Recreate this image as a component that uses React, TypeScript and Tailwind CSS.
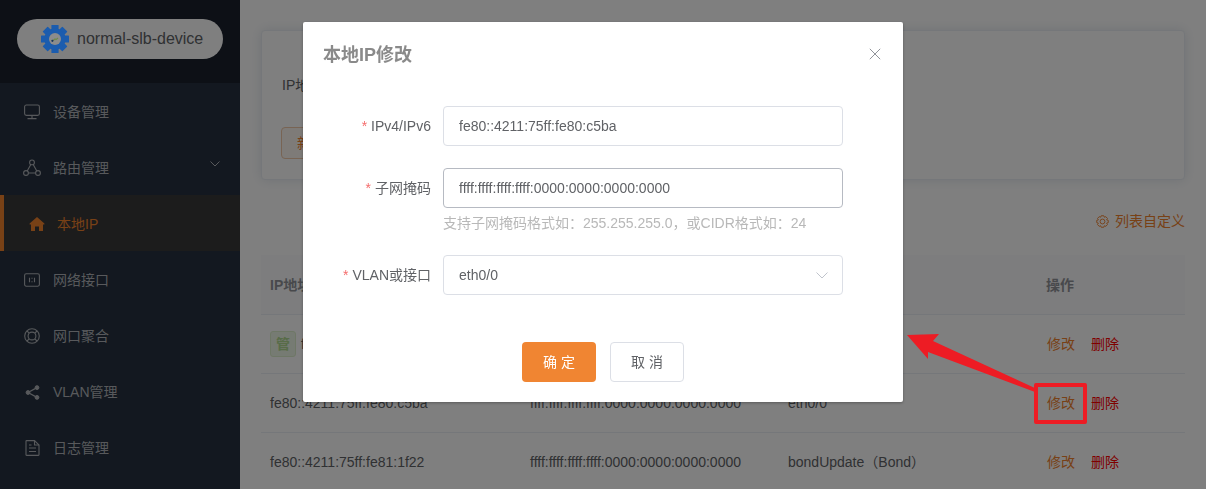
import React from "react";

const ff = { fontFamily: '"Liberation Sans","Noto Sans CJK SC",sans-serif' };

function MonitorIcon() {
  return (
    <svg width="16" height="16" viewBox="0 0 16 16" fill="none" stroke="currentColor" strokeWidth="1.1">
      <rect x="0.6" y="1" width="14.8" height="10.4" rx="1.8" />
      <path d="M8 11.4V14.4M3.5 14.6H12.5" />
    </svg>
  );
}
function RouteIcon() {
  return (
    <svg width="18" height="18" viewBox="0 0 18 18" fill="none" stroke="currentColor" strokeWidth="1.1">
      <circle cx="9" cy="3.4" r="2.4" />
      <circle cx="3" cy="14" r="2.4" />
      <circle cx="15" cy="14" r="2.4" />
      <path d="M7.8 5.5L4.2 11.9M10.2 5.5L13.8 11.9M5.4 14H12.6" />
    </svg>
  );
}
function HomeIcon() {
  return (
    <svg width="16" height="16" viewBox="0 0 16 16" fill="currentColor">
      <path d="M8 1L15.4 7.6V8.6H14V15H10V10.4H6V15H2V8.6H0.6V7.6Z" />
    </svg>
  );
}
function PortIcon() {
  return (
    <svg width="16" height="14" viewBox="0 0 16 14" fill="none" stroke="currentColor" strokeWidth="1.1">
      <rect x="0.6" y="0.8" width="14.8" height="12.4" rx="1.6" />
      <path d="M5.5 4.8V9.2M8 4.8V5.8M8 8.2V9.2M10.5 4.8V9.2" />
    </svg>
  );
}
function BondIcon() {
  return (
    <svg width="16" height="16" viewBox="0 0 16 16" fill="none" stroke="currentColor" strokeWidth="1.1">
      <circle cx="8" cy="8" r="7.3" />
      <circle cx="8" cy="8" r="3.9" />
      <path d="M3 3L5.2 5.2M13 3L10.8 5.2M3 13L5.2 10.8M13 13L10.8 10.8" />
    </svg>
  );
}
function ShareIcon() {
  return (
    <svg width="15" height="15" viewBox="0 0 15 15" fill="currentColor" stroke="currentColor" strokeWidth="1">
      <circle cx="12" cy="2.6" r="1.9" />
      <circle cx="3" cy="7.5" r="1.9" />
      <circle cx="12" cy="12.4" r="1.9" />
      <path d="M12 2.6L3 7.5L12 12.4" fill="none" strokeWidth="1.2" />
    </svg>
  );
}
function DocIcon() {
  return (
    <svg width="15" height="16" viewBox="0 0 15 16" fill="none" stroke="currentColor" strokeWidth="1.1">
      <path d="M1 1.2C1 .9 1.2 .6 1.6 .6H9.5L14 5V14.8C14 15.1 13.8 15.4 13.4 15.4H1.6C1.2 15.4 1 15.1 1 14.8Z" />
      <path d="M9.5 .6V5H14M4 8H11M4 11.5H11M4 5H6.5" />
    </svg>
  );
}
function Gear({ size, color, children }: { size: number; color: string; children?: React.ReactNode }) {
  const teeth = Array.from({ length: 8 }, (_, i) => i * 45);
  return (
    <svg width={size} height={size} viewBox="0 0 30 30">
      {teeth.map((a) => (
        <rect key={a} x="11.4" y="1" width="7.2" height="6" rx="0.6" fill={color} transform={`rotate(${a} 15 15)`} />
      ))}
      <circle cx="15" cy="15" r="10.6" fill={color} />
      {children}
    </svg>
  );
}
function OutlineGear() {
  return (
    <svg width="13" height="13" viewBox="0 0 14 14" fill="none" stroke="currentColor" strokeWidth="1">
      <path d="M5.6 .8H8.4L9 2.4L10.6 1.8L12.4 3.8L11.4 5.2L13.2 5.8V8.2L11.4 8.8L12.4 10.2L10.6 12.2L9 11.6L8.4 13.2H5.6L5 11.6L3.4 12.2L1.6 10.2L2.6 8.8L.8 8.2V5.8L2.6 5.2L1.6 3.8L3.4 1.8L5 2.4Z" />
      <circle cx="7" cy="7" r="2.6" />
    </svg>
  );
}

const menu: { label: string; icon: React.ReactNode; active?: boolean; arrow?: boolean }[] = [
  { label: "设备管理", icon: <MonitorIcon /> },
  { label: "路由管理", icon: <RouteIcon />, arrow: true },
  { label: "本地IP", icon: <HomeIcon />, active: true },
  { label: "网络接口", icon: <PortIcon /> },
  { label: "网口聚合", icon: <BondIcon /> },
  { label: "VLAN管理", icon: <ShareIcon /> },
  { label: "日志管理", icon: <DocIcon /> },
];

function Sidebar() {
  return (
    <aside className="w-[240px] shrink-0 bg-[#263140] h-[489px]">
      <div className="h-[83px] bg-[#1a202c] pt-[19px] pl-[17px]">
        <div className="w-[206px] h-[40px] rounded-[20px] bg-white flex items-center pl-[23px] gap-[7px] text-[16px] text-[#606266]">
          <span className="relative z-50 flex">
            <Gear size={30} color="#1b5cae">
              <circle cx="15" cy="15" r="6" fill="#8c8c8c" />
              <path d="M13 16.5L15 15L16 15.6L18 14" stroke="#6f8a4a" strokeWidth="1.2" fill="none" />
              <circle cx="12.4" cy="16.8" r="1.1" fill="#18345c" />
            </Gear>
          </span>
          <span>normal-slb-device</span>
        </div>
      </div>
      <nav className="pt-px">
        {menu.map((m) =>
          m.active ? (
            <div key={m.label} className="h-[56px] bg-[#383838] border-l-4 border-[#f0822d] flex items-center pl-[25px] pt-[2px] gap-[12px] text-[#f0822d] text-[14px] -mt-px mb-px">
              <span className="flex w-[16px]">{m.icon}</span>
              <span>{m.label}</span>
            </div>
          ) : (
            <div key={m.label} className="h-[56px] flex items-center pl-[23px] text-[#b0b3b8] text-[14px]">
              <span className="flex w-[18px] mr-[12px] items-center justify-center">{m.icon}</span>
              <span>{m.label}</span>
              {m.arrow && (
                <svg className="ml-auto mr-[20px] -mt-[8px]" width="10" height="6" viewBox="0 0 10 6" fill="none" stroke="currentColor" strokeWidth="1">
                  <path d="M.5 .5L5 5L9.5 .5" />
                </svg>
              )}
            </div>
          )
        )}
      </nav>
    </aside>
  );
}

const rows = [
  { ip: "fe80::4211:75ff:fe80:c5bb", mask: "ffff:ffff:ffff:ffff:0000:0000:0000:0000", port: "eth0/1", tag: true },
  { ip: "fe80::4211:75ff:fe80:c5ba", mask: "ffff:ffff:ffff:ffff:0000:0000:0000:0000", port: "eth0/0" },
  { ip: "fe80::4211:75ff:fe81:1f22", mask: "ffff:ffff:ffff:ffff:0000:0000:0000:0000", port: "bondUpdate（Bond）" },
];

function Main() {
  return (
    <main className="flex-1 bg-white pt-[30px] pl-[21px] pr-[21px] text-[14px] text-[#606266]">
      <div className="h-[150px] rounded bg-white border border-[#ebeef5] shadow-[0_0_12px_rgba(40,70,110,0.14)] pl-[20px] pt-[46px]">
        <div className="h-[16px] leading-[16px]">IP地址</div>
        <div className="mt-[34px] -ml-px w-[70px] h-[32px] rounded border border-[#f0c8a8] bg-[#fdf6f0] text-[#f0822d] pl-[15px] leading-[30px]">新增</div>
      </div>
      <div className="mt-[32px] h-[18px] flex items-center justify-end gap-[6px] text-[#f0822d] text-[14px] leading-[18px]">
        <OutlineGear />
        <span>列表自定义</span>
      </div>
      <div className="mt-[25px]">
        <div className="grid grid-cols-[260px_258px_258px_1fr] h-[60px] items-center pl-[9px] pt-[2px] font-bold text-[#909399] bg-[#fbfbfc] border-b border-[#ebeef5]">
          <span>IP地址</span>
          <span>子网掩码</span>
          <span>VLAN或接口</span>
          <span>操作</span>
        </div>
        {rows.map((r) => (
          <div key={r.ip} className="grid grid-cols-[260px_258px_259px_1fr] h-[59px] items-center pl-[9px] border-b border-[#ebeef5]">
            <span className="flex items-center gap-[5px]">
              {r.tag && (
                <span className="w-[26px] h-[26px] rounded-[3px] bg-[#edf6e6] border border-[#dcefcc] text-[#b0d890] font-bold flex items-center justify-center">管</span>
              )}
              {r.ip}
            </span>
            <span>{r.mask}</span>
            <span>{r.port}</span>
            <span className="flex gap-[16px]">
              <span className="text-[#f0822d]">修改</span>
              <span className="text-[#ff0000]">删除</span>
            </span>
          </div>
        ))}
      </div>
    </main>
  );
}

function Field({ label, value, select, focused, help }: { label: string; value: string; select?: boolean; focused?: boolean; help?: string }) {
  return (
    <div className="flex">
      <label className="w-[120px] h-[40px] pr-[12px] flex items-center justify-end text-[14px] text-[#606266] whitespace-nowrap">
        <span className="text-[#f56c6c] mr-[4px]">*</span>
        {label}
      </label>
      <div className="w-[400px]">
        <div className={`h-[40px] rounded border px-[15px] flex items-center justify-between text-[14px] text-[#606266] ${focused ? "border-[#b6bac2]" : "border-[#dcdfe6]"}`}>
          <span>{value}</span>
          {select && (
            <svg width="12" height="7" viewBox="0 0 12 7" fill="none" stroke="#c0c4cc" strokeWidth="1" className="-mr-[1px]">
              <path d="M.5 .5L6 6L11.5 .5" />
            </svg>
          )}
        </div>
        {help && <div className="mt-[5px] h-[20px] leading-[20px] text-[14px] text-[#b8b8b8] whitespace-nowrap">{help}</div>}
      </div>
    </div>
  );
}

function Dialog() {
  return (
    <div className="fixed inset-0 z-40 bg-black/50 flex justify-center items-start pt-[22px]">
      <div className="w-[600px] h-[380px] bg-white rounded-[2px] shadow-[0_1px_3px_rgba(0,0,0,0.3)] relative">
        <div className="flex items-center justify-between pl-[20px] pr-[22px] pt-[14px] h-[52px]">
          <h2 className="text-[18px] font-bold text-[#8a8a8a] leading-[24px]">本地IP修改</h2>
          <svg width="12" height="12" viewBox="0 0 12 12" fill="none" stroke="#909399" strokeWidth="1" className="-mt-[2px]">
            <path d="M.8 .8L11.2 11.2M11.2 .8L.8 11.2" />
          </svg>
        </div>
        <div className="pt-[32px] pl-[20px]">
          <Field label="IPv4/IPv6" value="fe80::4211:75ff:fe80:c5ba" />
          <div className="h-[22px]" />
          <Field label="子网掩码" value="ffff:ffff:ffff:ffff:0000:0000:0000:0000" focused help="支持子网掩码格式如：255.255.255.0，或CIDR格式如：24" />
          <div className="h-[22px]" />
          <Field label="VLAN或接口" value="eth0/0" select />
        </div>
        <div className="flex justify-end gap-[14px] pr-[219px] pt-[47px]">
          <button className="w-[74px] h-[40px] pl-[4px] rounded bg-[#f08532] text-white text-[14px] tracking-[4px]">确定</button>
          <button className="w-[74px] h-[40px] pl-[4px] rounded border border-[#dcdfe6] bg-white text-[#606266] text-[14px] tracking-[4px]">取消</button>
        </div>
      </div>
    </div>
  );
}

function Annotation() {
  return (
    <>
      <svg className="absolute left-[900px] top-[325px] z-50" width="145" height="75" viewBox="900 325 145 75">
        <polygon points="907,335 939,334 933,341 1037,389 1035,392 928,352 928,359" fill="#ed1c24" />
      </svg>
      <div className="absolute left-[1034px] top-[383px] w-[53px] h-[41px] border-[4px] border-[#ed1c24] rounded-[2px] z-50" />
    </>
  );
}

export default function App() {
  return (
    <div className="relative flex w-[1206px] h-[489px] overflow-hidden" style={ff}>
      <Sidebar />
      <Main />
      <Dialog />
      <Annotation />
    </div>
  );
}
